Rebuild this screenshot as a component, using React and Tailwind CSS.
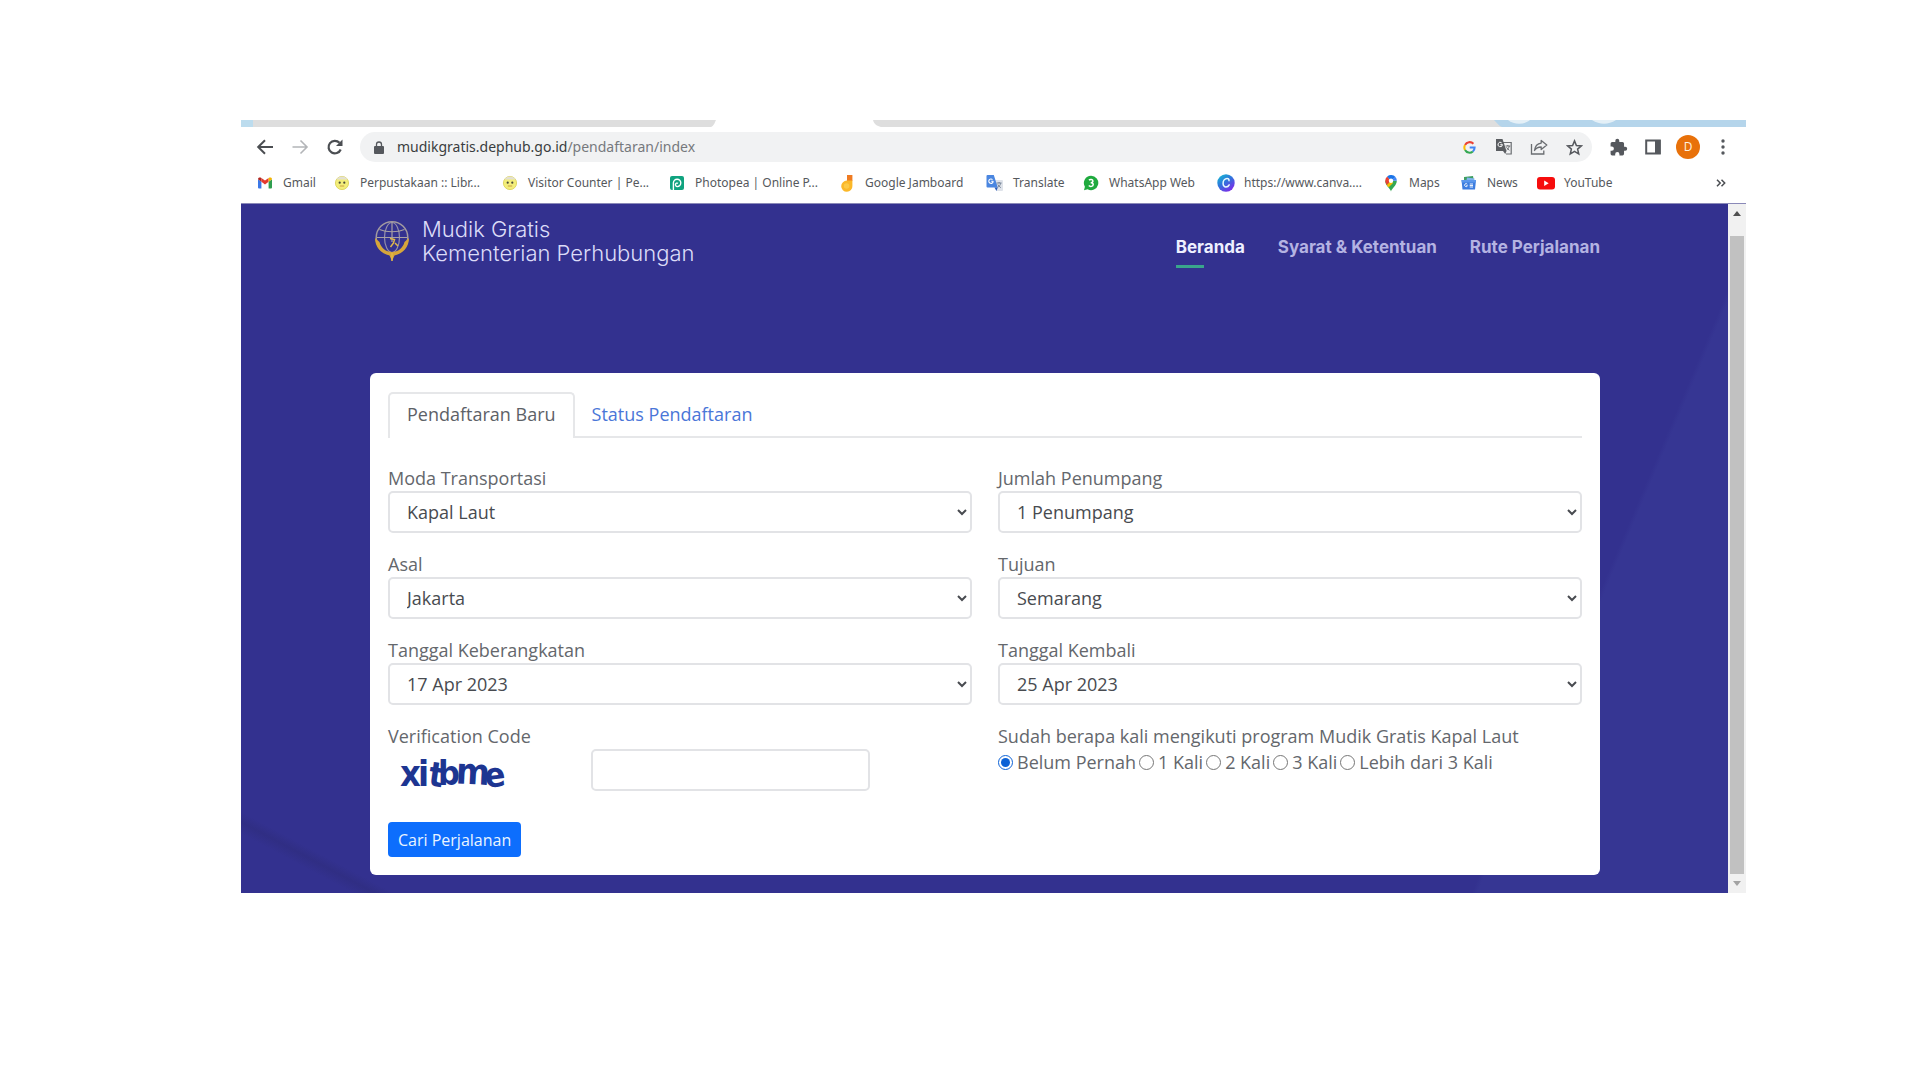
import React from 'react';

function GmailIcon() {
  return (
    <svg viewBox="0 0 18 18" className="size-[18px] shrink-0">
      <path d="M2 14.5V5.2l3.4 2.5v6.8H3a1 1 0 0 1-1-1Z" fill="#3b78e7" />
      <path d="M12.6 14.5V7.7L16 5.2v8.3a1 1 0 0 1-1 1Z" fill="#2f9e4f" />
      <path d="M5.4 7.7V3.9L9 6.6l3.6-2.7v3.8L9 10.4Z" fill="#e5392f" />
      <path d="M2 5.2C2 3.5 3.7 3 5.4 3.9v3.8Z" fill="#b3261e" />
      <path d="M16 5.2c0-1.7-1.7-2.2-3.4-1.3v3.8Z" fill="#f4b400" />
    </svg>
  );
}

function FaceIcon() {
  return (
    <svg viewBox="0 0 18 18" className="size-[18px] shrink-0">
      <circle cx="9" cy="9" r="6.6" fill="#f3ee7a" stroke="#d9cf52" strokeWidth=".8" />
      <path d="M3.400 5.600A6.600 6.600 0 0 1 14.600 5.600Z" fill="#e3e0d2" />
      <circle cx="6.700" cy="8.700" r="1.100" fill="#4a4a3a" />
      <circle cx="11.300" cy="8.700" r="1.100" fill="#4a4a3a" />
      <path d="M6.800 12h4.400" stroke="#c9953c" strokeWidth=".9" />
    </svg>
  );
}

function PhotopeaIcon() {
  return (
    <svg viewBox="0 0 18 18" className="size-[18px] shrink-0">
      <rect x="2" y="2" width="14" height="14" rx="2" fill="#10a37f" />
      <path d="M5.4 16V8.8a3.7 3.7 0 1 1 3.8 3.8 1.9 1.9 0 0 1-1.7-2.2 1.6 1.6 0 0 1 2.5-1" fill="none" stroke="#fff" strokeWidth="1.4" />
    </svg>
  );
}

function JamboardIcon() {
  return (
    <svg viewBox="0 0 18 18" className="size-[18px] shrink-0">
      <path d="M9 1h5.4v6H9Z" fill="#ef7b22" />
      <path d="M9 6.500h5.400v5.400A5.600 5.600 0 1 1 9 6.600Z" fill="#fbb829" />
      <circle cx="8.600" cy="12" r="2.800" fill="#fdc945" />
    </svg>
  );
}

function TranslateIcon() {
  return (
    <svg viewBox="0 0 18 18" className="size-[18px] shrink-0">
      <path d="M7.5 6H16a1 1 0 0 1 1 1v9a1 1 0 0 1-1 1h-5.5Z" fill="#dfe3ea" />
      <path d="M1.5 1h6.3l4 12.6H1.5A1 1 0 0 1 .5 12.6V2a1 1 0 0 1 1-1Z" fill="#4a86e0" />
      <path d="M8.5 13.6h3.3L10.4 17Z" fill="#2b5db8" />
      <path d="M7.300 7.300H5.300M7.200 7.300a2.200 2.200 0 1 1-.7-1.700" stroke="#fff" strokeWidth="1.100" fill="none" />
      <path d="M10.600 9h5M13.100 8v1.200M14.700 9.200c-.4 1.900-1.500 3.200-3 4.200M11.800 10.400c.7 1.400 1.700 2.500 3.100 3.300" stroke="#6c7a90" strokeWidth=".9" fill="none" />
    </svg>
  );
}

function WhatsAppIcon() {
  return (
    <svg viewBox="0 0 18 18" className="size-[18px] shrink-0">
      <path d="M9 1.800a7.200 7.200 0 1 1-3.400 13.500L2 16.200l.9-3.500A7.200 7.200 0 0 1 9 1.800Z" fill="#1faa3e" />
      <path d="M7 6.100c1.200-1.200 3.900-.8 3.900 1 0 1.200-1 1.700-2.200 1.700 1.400 0 2.500.5 2.500 1.800 0 2-3.100 2.400-4.400 1" stroke="#fff" strokeWidth="1.500" fill="none" />
    </svg>
  );
}

function CanvaIcon() {
  return (
    <svg viewBox="0 0 18 18" className="size-[18px] shrink-0">
      <defs>
        <linearGradient id="canva" x1="0" y1="0" x2=".7" y2="1">
          <stop offset="0" stopColor="#12c4d0" />
          <stop offset=".5" stopColor="#2f74dc" />
          <stop offset="1" stopColor="#7d2ae8" />
        </linearGradient>
      </defs>
      <circle cx="9" cy="9" r="8.700" fill="url(#canva)" />
      <path d="M12 6.700c.2-1.700-1-2.400-2.300-2.200-2.300.3-3.700 2.700-3.600 5.100.1 2 1.200 3.500 2.900 3.400 1.500 0 2.600-1 3.200-2.200" stroke="#e8fbff" strokeWidth="1.500" fill="none" strokeLinecap="round" />
    </svg>
  );
}

function MapsIcon() {
  return (
    <svg viewBox="0 0 18 18" className="size-[18px] shrink-0">
      <path d="M9 17.500c-.7-3.200-5.800-5.700-5.800-10.700h11.600c0 5-5.100 7.500-5.800 10.700Z" fill="#34a853" />
      <path d="M3.200 6.800a5.800 5.800 0 0 1 2-4.400L9 6.800 4.800 11a7.600 7.600 0 0 1-1.600-4.200Z" fill="#e94235" />
      <path d="M5.200 2.400A5.800 5.800 0 0 1 13.500 3L9 7Z" fill="#1a73e8" />
      <path d="M13.500 3a5.800 5.800 0 0 1 1.300 3.800H9Z" fill="#4285f4" />
      <path d="M4.800 11 9 6.800l2 2.200-4.300 4.300A17 17 0 0 1 4.800 11Z" fill="#fbbc04" />
      <circle cx="9" cy="6.800" r="2.200" fill="#fff" />
    </svg>
  );
}

function NewsIcon() {
  return (
    <svg viewBox="0 0 18 18" className="size-[18px] shrink-0">
      <path d="M4 3l9-1 1 5H4Z" fill="#3f9e63" />
      <path d="M7 3.500l7.500 1L14 9H6Z" fill="#7fb3ee" />
      <path d="M1.500 6h14.500l-1 9.500h-12.500Z" fill="#3c7de0" />
      <path d="M1.500 6h14.500l-.3 2.500H1.800Z" fill="#5b97ec" />
      <path d="M7.300 10.200a1.500 1.500 0 1 0 .2 1.500H6.200M9.700 10h3.300M9.700 11.500h3.300M9.700 13h3.300" stroke="#fff" strokeWidth=".9" fill="none" />
    </svg>
  );
}

function YouTubeIcon() {
  return (
    <svg viewBox="0 0 18 18" className="size-[18px] shrink-0">
      <rect x="0" y="3" width="18" height="12.500" rx="3" fill="#f60d0d" />
      <path d="M7.200 6.600v5.300l4.500-2.650Z" fill="#fff" />
    </svg>
  );
}

const bookmarks = [
  { label: 'Gmail', Icon: GmailIcon },
  { label: 'Perpustakaan :: Libr...', Icon: FaceIcon },
  { label: 'Visitor Counter | Pe...', Icon: FaceIcon },
  { label: 'Photopea | Online P...', Icon: PhotopeaIcon },
  { label: 'Google Jamboard', Icon: JamboardIcon },
  { label: 'Translate', Icon: TranslateIcon },
  { label: 'WhatsApp Web', Icon: WhatsAppIcon },
  { label: 'https://www.canva....', Icon: CanvaIcon },
  { label: 'Maps', Icon: MapsIcon },
  { label: 'News', Icon: NewsIcon },
  { label: 'YouTube', Icon: YouTubeIcon },
];

function TabStrip() {
  return (
    <div className="flex h-[7px] bg-[#dedede]">
      <div className="w-3 bg-[#bcdcee]" />
      <div className="flex-[458]" />
      <svg viewBox="0 0 170 7" preserveAspectRatio="none" className="h-[7px] flex-[170]">
        <path d="M0 7C3 6 4 2 5 0H162C163 4 166 6 170 7Z" fill="#fff" />
      </svg>
      <div className="flex-[613]" />
      <svg viewBox="0 0 252 7" preserveAspectRatio="none" className="h-[7px] flex-[252]">
        <path d="M0 0H252V7H8C5 6 3 3 0 0Z" fill="#b5d5eb" />
        <path d="M14 0H36C30 5 20 5 14 0ZM98 0H122C114 5 106 5 98 0Z" fill="#e4f0f7" />
      </svg>
    </div>
  );
}

function IconButton({ label, children }) {
  return (
    <button type="button" aria-label={label} className="flex size-[18px] items-center justify-center text-[#5a5d61]">
      {children}
    </button>
  );
}

function Toolbar() {
  return (
    <div className="flex h-[40px] items-center bg-white pl-[15px] pr-[14px]">
      <div className="flex items-center gap-[17px]">
        <IconButton label="Kembali">
          <svg viewBox="0 0 18 18" className="size-[18px]" fill="none" stroke="#4b4e52" strokeWidth="2">
            <path d="M17 9H2.500M9 2.200 2.200 9 9 15.800" />
          </svg>
        </IconButton>
        <IconButton label="Maju">
          <svg viewBox="0 0 18 18" className="size-[18px]" fill="none" stroke="#b3b5b8" strokeWidth="1.600">
            <path d="M1.500 9H16M9.500 2.500 16 9l-6.500 6.500" />
          </svg>
        </IconButton>
        <IconButton label="Muat ulang">
          <svg viewBox="0 0 18 18" className="size-[18px]" fill="none" stroke="#4b4e52" strokeWidth="2.200">
            <path d="M14.700 11.500A6.300 6.300 0 1 1 13.500 4.800" />
            <path d="M16.500 1.500V8H10Z" fill="#4b4e52" stroke="none" />
          </svg>
        </IconButton>
      </div>
      <div className="ml-4 flex h-[30px] flex-1 items-center rounded-full bg-[#f1f2f3] pl-[14px] pr-[9px]">
        <svg viewBox="0 0 10 13" className="h-[13px] w-[10px] shrink-0">
          <rect x="0" y="5" width="10" height="8" rx="1" fill="#55585d" />
          <path d="M2.500 5.500V3.500a2.500 2.500 0 0 1 5 0v2" fill="none" stroke="#55585d" strokeWidth="1.300" />
        </svg>
        <p className="ml-[13px] flex-1 font-['Noto_Sans',sans-serif] text-[14px] leading-5 text-[#3a3d40]">
          mudikgratis.dephub.go.id<span className="text-[#76797d]">/pendaftaran/index</span>
        </p>
        <div className="flex items-center gap-[17px]">
          <IconButton label="Google">
            <svg viewBox="0 0 14 14" className="size-[13px]" fill="none" strokeWidth="2.200">
              <path d="M11.200 3A5.500 5.500 0 0 0 2.200 4.300" stroke="#ea4335" />
              <path d="M2.200 4.300a5.500 5.500 0 0 0 0 5.400" stroke="#fbbc05" />
              <path d="M2.200 9.700a5.500 5.500 0 0 0 8.400 1.500" stroke="#34a853" />
              <path d="M10.600 11.200A5.500 5.500 0 0 0 12.500 7H7.200" stroke="#4285f4" />
            </svg>
          </IconButton>
          <IconButton label="Terjemahkan">
            <svg viewBox="0 0 18 18" className="size-[18px]" fill="none">
              <path d="M8 4.500h8.200V16H11" stroke="#6a6d71" strokeWidth="1.200" />
              <path d="M1 1h6.500l4 12H1Z" fill="#5a5d61" />
              <path d="M8 13h3.500L10.300 16Z" fill="#5a5d61" />
              <path d="M7.500 6.700H5.300M7.400 6.700a2.200 2.200 0 1 1-.7-1.800" stroke="#fff" />
              <path d="M10.500 8h4.800M12.800 7v1M14.300 8c-.3 1.700-1.300 3-2.600 4M11.500 9.300c.7 1.200 1.600 2.200 2.900 3" stroke="#6a6d71" />
            </svg>
          </IconButton>
          <IconButton label="Bagikan">
            <svg viewBox="0 0 18 18" className="size-[18px]" fill="none" stroke="#6a6d71" strokeWidth="1.300">
              <path d="M1.500 6v10H13.800v-3.500" />
              <path d="M11.200 2.500 16.800 7l-5.600 4.500V9C8 9 6 10 4.500 12.500 5 8.500 7.300 5.500 11.200 5.100Z" strokeLinejoin="round" />
            </svg>
          </IconButton>
          <IconButton label="Tandai halaman ini">
            <svg viewBox="0 0 18 18" className="size-[17px]" fill="none" stroke="#55585d" strokeWidth="1.600">
              <path d="m9 2 2 4.900 5.300.4-4 3.400 1.200 5.200L9 13.100l-4.500 2.800 1.200-5.200-4-3.400 5.300-.4Z" strokeLinejoin="miter" />
            </svg>
          </IconButton>
        </div>
      </div>
      <div className="ml-[17px] flex items-center gap-[17px]">
        <IconButton label="Ekstensi">
          <svg viewBox="0 0 24 24" className="size-[19px] shrink-0" fill="#55585d">
            <path d="M20.500 11H19V7a2 2 0 0 0-2-2h-4V3.500a2.500 2.500 0 0 0-5 0V5H4a2 2 0 0 0-2 2v3.800h1.500a2.700 2.700 0 0 1 0 5.400H2V20a2 2 0 0 0 2 2h3.800v-1.500a2.700 2.700 0 0 1 5.400 0V22H17a2 2 0 0 0 2-2v-4h1.500a2.500 2.500 0 0 0 0-5Z" />
          </svg>
        </IconButton>
        <IconButton label="Panel samping">
          <svg viewBox="0 0 16 16" className="size-4" fill="none">
            <path d="M1.200 1.500h13.600v13H1.200Z" stroke="#55585d" strokeWidth="2" />
            <path d="M10 1h5.500v14H10Z" fill="#55585d" />
          </svg>
        </IconButton>
        <button type="button" className="-mx-[3px] flex size-6 items-center justify-center rounded-full bg-[#e8710a] text-[12px] leading-4 text-[#fff3e0]">
          D
        </button>
        <IconButton label="Menu">
          <svg viewBox="0 0 18 18" className="size-[18px]" fill="#55585d">
            <circle cx="9" cy="3" r="1.700" />
            <circle cx="9" cy="9" r="1.700" />
            <circle cx="9" cy="15" r="1.700" />
          </svg>
        </IconButton>
      </div>
    </div>
  );
}

function BookmarksBar() {
  return (
    <nav aria-label="Bookmark" className="flex h-[36px] items-start bg-white pl-[15px] pr-5 pt-[6px] font-['Noto_Sans',sans-serif] text-[12px] leading-5 text-[#55585c]">
      <ul className="grid flex-1 grid-cols-[77fr_168fr_167fr_170fr_148fr_96fr_135fr_165fr_78fr_77fr_179fr]">
        {bookmarks.map(({ label, Icon }) => (
          <li key={label}>
            <a href="#" className="flex items-center gap-[9px] whitespace-nowrap">
              <Icon />
              {label}
            </a>
          </li>
        ))}
      </ul>
      <button type="button" aria-label="Bookmark lainnya" className="flex h-5 items-center">
        <svg viewBox="0 0 10 8" className="h-2 w-[10px]" fill="none" stroke="#4b4e52" strokeWidth="1.500">
          <path d="m1 .8 3.200 3.200L1 7.200M5.500.8 8.700 4 5.500 7.200" />
        </svg>
      </button>
    </nav>
  );
}

function Emblem() {
  return (
    <svg viewBox="0 0 36 42" className="h-[42px] w-9 shrink-0" fill="none">
      <circle cx="18" cy="17.500" r="15.800" stroke="#a29aa0" strokeWidth="1.500" />
      <ellipse cx="18" cy="17.500" rx="7.500" ry="15" stroke="#958fa8" strokeWidth="1.200" />
      <path d="M18 2v20M3 17.500h30M5.500 9.500c7 3 18 3 25 0" stroke="#a8a0a4" strokeWidth="1.200" />
      <path d="M1 18c0 9 6 15.500 14.500 17.500L18 41l2.500-5.500C29 33.500 35 27 35 18l-4.500 4C29 28 24 32 18 32S7 28 5.500 22Z" fill="#d6a63a" />
      <path d="M16 18.500l4.500 1-1 3.500-3 4M21 23l3 3M18 33v8" stroke="#e0b84a" strokeWidth="1.500" />
    </svg>
  );
}

const navItems = ['Beranda', 'Syarat & Ketentuan', 'Rute Perjalanan'];

function SiteHeader() {
  return (
    <header className="flex items-start justify-between pl-1 pt-[13px]">
      <a href="#" className="flex items-center gap-3">
        <Emblem />
        <span className="font-[Inter,sans-serif] text-[22px] font-light leading-6 text-[#dcdcf8]">
          Mudik Gratis
          <br />
          Kementerian Perhubungan
        </span>
      </a>
      <nav aria-label="Menu utama" className="flex gap-[33px] pt-[18px] font-[Inter,sans-serif] text-[17px] font-bold leading-6">
        {navItems.map((item, i) => (
          <a key={item} href="#" className={i === 0 ? 'text-[#eef0ff]' : 'text-[#b4b3e2]'}>
            {item}
            {i === 0 && <span className="mt-[6px] block h-[3px] w-7 bg-[#3aa58c]" />}
          </a>
        ))}
      </nav>
    </header>
  );
}

function SelectField({ id, label, value }) {
  return (
    <div>
      <label htmlFor={id} className="block h-[26px] leading-[26px]">
        {label}
      </label>
      <select id={id} defaultValue={value} className="block h-[42px] w-full rounded-[5px] border-2 border-[#e2e3e6] bg-white pl-[13px] text-[#484b50]">
        <option>{value}</option>
      </select>
    </div>
  );
}

const fields = [
  { id: 'moda', label: 'Moda Transportasi', value: 'Kapal Laut' },
  { id: 'jumlah', label: 'Jumlah Penumpang', value: '1 Penumpang' },
  { id: 'asal', label: 'Asal', value: 'Jakarta' },
  { id: 'tujuan', label: 'Tujuan', value: 'Semarang' },
  { id: 'berangkat', label: 'Tanggal Keberangkatan', value: '17 Apr 2023' },
  { id: 'kembali', label: 'Tanggal Kembali', value: '25 Apr 2023' },
];

const counts = ['Belum Pernah', '1 Kali', '2 Kali', '3 Kali', 'Lebih dari 3 Kali'];

function Captcha() {
  return (
    <svg viewBox="0 0 120 42" className="h-[42px] w-[120px] overflow-visible" fill="#1d3591" fontFamily="'Liberation Sans Narrow', 'DejaVu Sans Condensed', sans-serif" fontWeight="700">
      <text x="12" y="37" fontSize="36">x</text>
      <text x="30" y="37" fontSize="36">i</text>
      <text x="41" y="37" fontSize="34" transform="rotate(8 46 26)">t</text>
      <text x="50" y="36" fontSize="34">b</text>
      <text x="68" y="35" fontSize="36" transform="rotate(3 80 24)">m</text>
      <text x="97" y="38" fontSize="34" transform="rotate(-6 104 32)">e</text>
    </svg>
  );
}

function RegistrationCard() {
  return (
    <form className="rounded-[6px] bg-white px-[18px] pb-[18px] pt-[19px] font-['Open_Sans',sans-serif] text-[18px] text-[#64676c]" onSubmit={(e) => e.preventDefault()}>
      <div role="tablist" className="flex border-b-2 border-[#e6e7e9]">
        <button type="button" role="tab" aria-selected="true" className="-mb-[2px] h-[46px] rounded-t-[5px] border-2 border-b-0 border-[#e6e7e9] bg-white px-[17px] pb-[3px] text-[#5d6167]">
          Pendaftaran Baru
        </button>
        <button type="button" role="tab" aria-selected="false" className="h-[44px] px-[17px] text-[#4a76d8]">
          Status Pendaftaran
        </button>
      </div>
      <div className="mt-[27px] grid grid-cols-2 gap-x-[26px] gap-y-[18px]">
        {fields.map((field) => (
          <SelectField key={field.id} {...field} />
        ))}
        <div>
          <label htmlFor="kode" className="block h-[26px] leading-[26px]">
            Verification Code
          </label>
          <div className="grid grid-cols-[203fr_278fr_102fr]">
            <Captcha />
            <input id="kode" type="text" className="h-[42px] min-w-0 rounded-[5px] border-2 border-[#e2e3e6] px-4" />
          </div>
        </div>
        <fieldset>
          <legend className="h-[26px] leading-[26px]">Sudah berapa kali mengikuti program Mudik Gratis Kapal Laut</legend>
          <div className="flex gap-[3px] leading-[26px]">
            {counts.map((count, i) => (
              <label key={count} className="flex items-center gap-[4px] whitespace-nowrap">
                <input type="radio" name="ikut" defaultChecked={i === 0} className="size-[15px] accent-[#0d62d6]" />
                {count}
              </label>
            ))}
          </div>
        </fieldset>
      </div>
      <button type="submit" className="mt-[31px] h-[35px] rounded-[4px] bg-[#0d6efd] px-[10px] text-[16px] font-medium text-[#eaf4ff]">
        Cari Perjalanan
      </button>
    </form>
  );
}

function ScrollBar() {
  return (
    <div className="flex w-[18px] flex-col items-center bg-[#f1f1f1]">
      <svg viewBox="0 0 8 5" className="mt-[7px] h-[5px] w-2">
        <path d="M4 0 8 5H0Z" fill="#505050" />
      </svg>
      <div className="mt-5 w-[14px] flex-1 bg-[#c1c1c1]" />
      <svg viewBox="0 0 8 5" className="my-[7px] h-[5px] w-2">
        <path d="M0 0H8L4 5Z" fill="#a3a3a3" />
      </svg>
    </div>
  );
}

export default function App() {
  return (
    <div className="min-h-screen bg-white pb-[187px] pl-[241px] pr-[174px] pt-[120px] font-['Open_Sans',sans-serif]">
      <TabStrip />
      <Toolbar />
      <BookmarksBar />
      <div className="flex border-t border-[#8a89b8]">
        <main className="flex-1 bg-[#33318f] bg-[linear-gradient(113deg,transparent_85.6%,#363693_85.9%),linear-gradient(208deg,transparent_94.5%,#302e84_95.2%,transparent_96%)] pb-[18px] pl-[129px] pr-[128px]">
          <SiteHeader />
          <div className="mt-[105px]">
            <RegistrationCard />
          </div>
        </main>
        <ScrollBar />
      </div>
    </div>
  );
}
